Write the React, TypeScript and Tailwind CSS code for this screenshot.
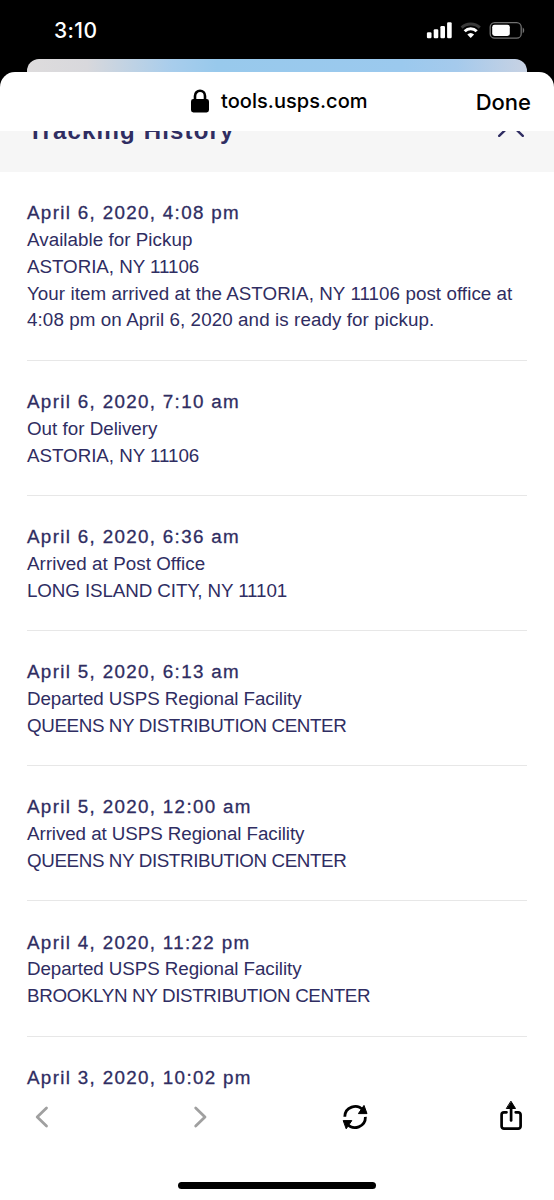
interface TrackingEvent {
  date: string;
  lines: { text: string; tracking?: string }[];
}

const events: TrackingEvent[] = [
  {
    date: "April 6, 2020, 4:08 pm",
    lines: [
      { text: "Available for Pickup", tracking: "tracking-[0.04px]" },
      { text: "ASTORIA, NY 11106", tracking: "tracking-[-0.04px]" },
      { text: "Your item arrived at the ASTORIA, NY 11106 post office at", tracking: "tracking-[0.06px]" },
      { text: "4:08 pm on April 6, 2020 and is ready for pickup.", tracking: "tracking-[0.09px]" },
    ],
  },
  {
    date: "April 6, 2020, 7:10 am",
    lines: [{ text: "Out for Delivery" }, { text: "ASTORIA, NY 11106", tracking: "tracking-[-0.04px]" }],
  },
  {
    date: "April 6, 2020, 6:36 am",
    lines: [
      { text: "Arrived at Post Office", tracking: "tracking-[0.05px]" },
      { text: "LONG ISLAND CITY, NY 11101", tracking: "tracking-[-0.1px]" },
    ],
  },
  {
    date: "April 5, 2020, 6:13 am",
    lines: [
      { text: "Departed USPS Regional Facility", tracking: "tracking-[-0.07px]" },
      { text: "QUEENS NY DISTRIBUTION CENTER", tracking: "tracking-[-0.38px]" },
    ],
  },
  {
    date: "April 5, 2020, 12:00 am",
    lines: [
      { text: "Arrived at USPS Regional Facility", tracking: "tracking-[-0.07px]" },
      { text: "QUEENS NY DISTRIBUTION CENTER", tracking: "tracking-[-0.38px]" },
    ],
  },
  {
    date: "April 4, 2020, 11:22 pm",
    lines: [
      { text: "Departed USPS Regional Facility", tracking: "tracking-[-0.07px]" },
      { text: "BROOKLYN NY DISTRIBUTION CENTER", tracking: "tracking-[-0.35px]" },
    ],
  },
  { date: "April 3, 2020, 10:02 pm", lines: [] },
];

function StatusBar() {
  return (
    <div className="flex h-[59px] shrink-0 items-start justify-between pr-[29px] pl-[54px] text-white">
      <span className="mt-[18px] font-['Inter',sans-serif] text-[21px] leading-[26px] font-medium tracking-[0.4px]">3:10</span>
      <div className="mt-[20px] flex h-[20px] items-center">
        <svg className="h-[20px] w-[27px]" viewBox="0 0 27 20" fill="currentColor">
          <rect x="0.9" y="12.2" width="4.6" height="6" rx="1.2" />
          <rect x="7.7" y="9.3" width="4.6" height="8.9" rx="1.2" />
          <rect x="14.4" y="6" width="4.6" height="12.2" rx="1.2" />
          <rect x="21.1" y="2.2" width="4.6" height="16" rx="1.2" />
        </svg>
        <svg className="ml-[7px] h-[20px] w-[22px]" viewBox="0 0 22 20" fill="none" strokeWidth="3">
          <path d="M1.6 7.6a13.3 13.3 0 0 1 18.2 0" stroke="#3a3a3a" />
          <path d="M4.7 11.3a8.6 8.6 0 0 1 12 0" stroke="currentColor" />
          <path d="M10.7 18l-3.4-3.5a5 5 0 0 1 6.8 0z" fill="currentColor" />
        </svg>
        <svg className="ml-[7px] h-[20px] w-[36px]" viewBox="0 0 36 20">
          <rect x="1.2" y="2.6" width="31" height="15.6" rx="4.5" fill="none" stroke="#717171" strokeWidth="1.3" />
          <rect x="3.2" y="4.8" width="17.6" height="11.2" rx="2.4" fill="currentColor" />
          <path d="M33.7 7.5c2 1 2 4.6 0 5.8z" fill="#717171" />
        </svg>
      </div>
    </div>
  );
}

function SheetHeader() {
  return (
    <header className="flex h-[59px] shrink-0 items-center rounded-t-[15px] bg-white pr-[23px] pl-[190px] font-['Inter',sans-serif] font-medium text-black">
      <svg className="-mt-[1px] h-[24px] w-[20px]" viewBox="0 0 20 24">
        <rect x="1" y="10" width="18" height="13.5" rx="2.4" />
        <path d="M5 11V7a5 5.3 0 0 1 10 0v4" fill="none" stroke="currentColor" strokeWidth="2.6" />
      </svg>
      <span className="-mt-[2px] ml-[11px] text-[20px] leading-[26px] tracking-[0.04px]">tools.usps.com</span>
      <button className="ml-auto text-[22px] leading-[28px]">Done</button>
    </header>
  );
}

function HistoryBar() {
  return (
    <div className="flex h-[41px] shrink-0 items-start justify-between overflow-hidden bg-[#f6f6f6] pr-[28px] pl-[28px] text-[#2f2d62]">
      <h2 className="-mt-[16px] text-[24px] leading-[32px] font-bold tracking-[1.15px]">Tracking History</h2>
      <svg className="-mt-[12px] h-[18px] w-[30px]" viewBox="0 0 30 18" fill="none" stroke="currentColor" strokeWidth="2.4" strokeLinecap="round">
        <path d="M3.2 16.8L15 5.5L26.8 16.8" />
      </svg>
    </div>
  );
}

function EventRow({ event }: { event: TrackingEvent }) {
  return (
    <li className="border-b border-[#e7e7e7] pt-[28.2px] pb-[25.6px] text-[18.8px] leading-[26.8px] whitespace-nowrap text-[#2f2d62]">
      <h3 className="tracking-[1.33px] [-webkit-text-stroke:0.3px_#2f2d62]">{event.date}</h3>
      {event.lines.map((line) => (
        <p className={line.tracking} key={line.text}>
          {line.text}
        </p>
      ))}
    </li>
  );
}

function Toolbar() {
  return (
    <nav className="flex h-[108px] shrink-0 flex-col items-center justify-between bg-white pt-[8px] pb-[11px]">
      <div className="flex w-full items-center pl-[34px]">
        <svg className="h-[34px] w-[16px]" viewBox="0 0 16 34" fill="none" stroke="#a0a0a0" strokeWidth="2.8" strokeLinecap="round" strokeLinejoin="round">
          <path d="M12.5 8L3.2 17l9.3 9" />
        </svg>
        <svg className="ml-[142px] h-[34px] w-[16px]" viewBox="0 0 16 34" fill="none" stroke="#a0a0a0" strokeWidth="2.8" strokeLinecap="round" strokeLinejoin="round">
          <path d="M3.7 8l9.3 9-9.3 9" />
        </svg>
        <svg className="ml-[134px] h-[34px] w-[26px]" viewBox="0 0 26 34" fill="none" stroke="#000" strokeWidth="2.8">
          <path d="M2.8 16.7A10.3 10.3 0 0 1 21 10.2" />
          <path d="M23.4 16.9A10.3 10.3 0 0 1 5.2 23.8" />
          <path d="M22 5.4l3 8.2h-8.6z" fill="#000" stroke="#000" strokeWidth="1" strokeLinejoin="round" />
          <path d="M4.2 28.8l-3-8.2h8.6z" fill="#000" stroke="#000" strokeWidth="1" strokeLinejoin="round" />
        </svg>
        <svg className="ml-[130px] h-[34px] w-[26px]" viewBox="0 0 26 34" fill="none" stroke="#000" strokeWidth="2.7" strokeLinecap="round">
          <path d="M8.5 12.3H6a2.4 2.4 0 0 0-2.4 2.4v11.6A2.4 2.4 0 0 0 6 28.7h14.2a2.4 2.4 0 0 0 2.4-2.4V14.7a2.4 2.4 0 0 0-2.4-2.4h-2.5" />
          <path d="M13.1 20.5V6" />
          <path d="M13.1 1.5l4.4 7H8.7z" fill="#000" stroke="#000" strokeWidth="1" strokeLinejoin="round" />
        </svg>
      </div>
      <div className="h-[7px] w-[198px] rounded-full bg-black" />
    </nav>
  );
}

export default function App() {
  return (
    <div className="flex h-[1200px] w-[554px] flex-col overflow-hidden bg-black font-['Liberation_Sans',Arial,sans-serif]">
      <StatusBar />
      <div className="mx-[27px] h-[13px] shrink-0 rounded-t-[12px] bg-[linear-gradient(90deg,#dedcdd_0%,#d8d8dc_12%,#a8cdec_29%,#98c9ec_38%,#9bc9ee_75%,#a5caec_86%,#c8d2e3_100%)]" />
      <SheetHeader />
      <HistoryBar />
      <main className="min-h-0 flex-1 overflow-hidden bg-white px-[27px]">
        <ul>
          {events.map((event) => (
            <EventRow event={event} key={event.date} />
          ))}
        </ul>
      </main>
      <Toolbar />
    </div>
  );
}
